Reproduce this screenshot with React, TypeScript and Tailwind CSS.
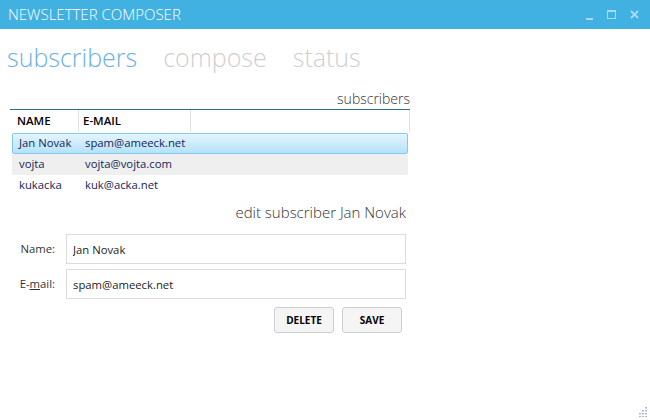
import { useState } from 'react'

const rows = [
  { name: 'Jan Novak', email: 'spam@ameeck.net' },
  { name: 'vojta', email: 'vojta@vojta.com' },
  { name: 'kukacka', email: 'kuk@acka.net' },
]

export default function App() {
  const [sel, setSel] = useState(0)
  const current = rows[sel]

  return (
    <div className="w-[650px] h-[420px] bg-white flex flex-col font-['Open_Sans',sans-serif] text-[#333] relative overflow-hidden">
      {/* title bar */}
      <div className="h-[29px] bg-[#41b1e1] flex items-center pl-2 pr-[11px] shrink-0">
        <span className="text-white text-[15px] font-light">NEWSLETTER COMPOSER</span>
        <div className="ml-auto flex items-center gap-[14px]">
          <div className="w-[7px] h-[2px] bg-[#a8dcf4] mt-[8px]" />
          <div className="w-[9px] h-[9px] border border-[#a8dcf4] border-t-2" />
          <svg width="9" height="9" viewBox="0 0 9 9">
            <path d="M1 1L8 8M8 1L1 8" stroke="#a8dcf4" strokeWidth="1.8" />
          </svg>
        </div>
      </div>

      {/* tabs */}
      <div className="flex items-end gap-[26px] pl-[7px] mt-[11px] text-[25px] font-light leading-[34px]">
        <span className="text-[#6ab0de]">subscribers</span>
        <span className="text-[#cfcfcf]">compose</span>
        <span className="text-[#cfcfcf]">status</span>
      </div>

      <div className="w-[400px] ml-[10px] mt-[15px]">
        <div className="text-right text-[14px] font-light leading-[20px] text-[#333]">subscribers</div>

        <div className="border-t border-[#2b6d8e]">
          <div className="flex h-[22px] items-center text-[11.5px] font-semibold text-black">
            <div className="w-[69px] pl-[7px] h-full flex items-center border-r border-[#e2e2e2]">NAME</div>
            <div className="w-[112px] pl-[4px] h-full flex items-center border-r border-[#e2e2e2]">E-MAIL</div>
            <div className="flex-1 h-full border-r border-[#e2e2e2]" />
          </div>
          <div className="mt-[1px] flex flex-col text-[11.3px] text-[#14245a] px-[2px]">
            {rows.map((r, i) => (
              <div
                key={r.email}
                onClick={() => setSel(i)}
                className={
                  'flex items-center h-[21px] rounded-[2px] cursor-default ' +
                  (i === sel
                    ? 'bg-gradient-to-b from-[#e4f5fd] to-[#b5e2f9] border border-[#84c8ef]'
                    : i === 1
                      ? 'bg-[#efefef] border border-transparent'
                      : 'border border-transparent')
                }
              >
                <span className="w-[67px] pl-[6px]">{r.name}</span>
                <span className="pl-[5px]">{r.email}</span>
              </div>
            ))}
          </div>
        </div>

        <div className="text-right text-[15px] font-light mt-[6px] pr-[4px] leading-[20px]">edit subscriber {current.name}</div>

        <div className="mt-[12px] flex flex-col gap-[5px] text-[11.3px]">
          <div className="flex items-center">
            <label className="w-[46px] text-right pr-[1px] text-[#333]">Name:</label>
            <input
              readOnly
              value={current.name}
              className="ml-[10px] w-[340px] h-[30px] border border-[#dcdcdc] px-[6px] outline-none text-[11.3px] text-[#222]"
            />
          </div>
          <div className="flex items-center">
            <label className="w-[46px] text-right pr-[1px] text-[#333]">
              E-<span className="underline">m</span>ail:
            </label>
            <input
              readOnly
              value={current.email}
              className="ml-[10px] w-[340px] h-[30px] border border-[#dcdcdc] px-[6px] outline-none text-[11.3px] text-[#222]"
            />
          </div>
          <div className="flex justify-end gap-[8px] pr-[8px] mt-[3px]">
            <button className="w-[60px] h-[26px] bg-[#f5f5f5] border border-[#cfcfcf] rounded-[3px] text-[10px] font-bold text-black">DELETE</button>
            <button className="w-[60px] h-[26px] bg-[#f5f5f5] border border-[#cfcfcf] rounded-[3px] text-[10px] font-bold text-black">SAVE</button>
          </div>
        </div>
      </div>

      {/* resize grip */}
      <svg className="absolute right-[3px] bottom-[3px]" width="10" height="10" viewBox="0 0 10 10">
        {[
          [8, 0], [5, 3], [8, 3], [2, 6], [5, 6], [8, 6], [2, 9], [5, 9], [8, 9],
        ].map(([x, y], i) => (
          <rect key={i} x={x} y={y} width="2" height="1.5" fill="#a9b8d6" />
        ))}
      </svg>
    </div>
  )
}
